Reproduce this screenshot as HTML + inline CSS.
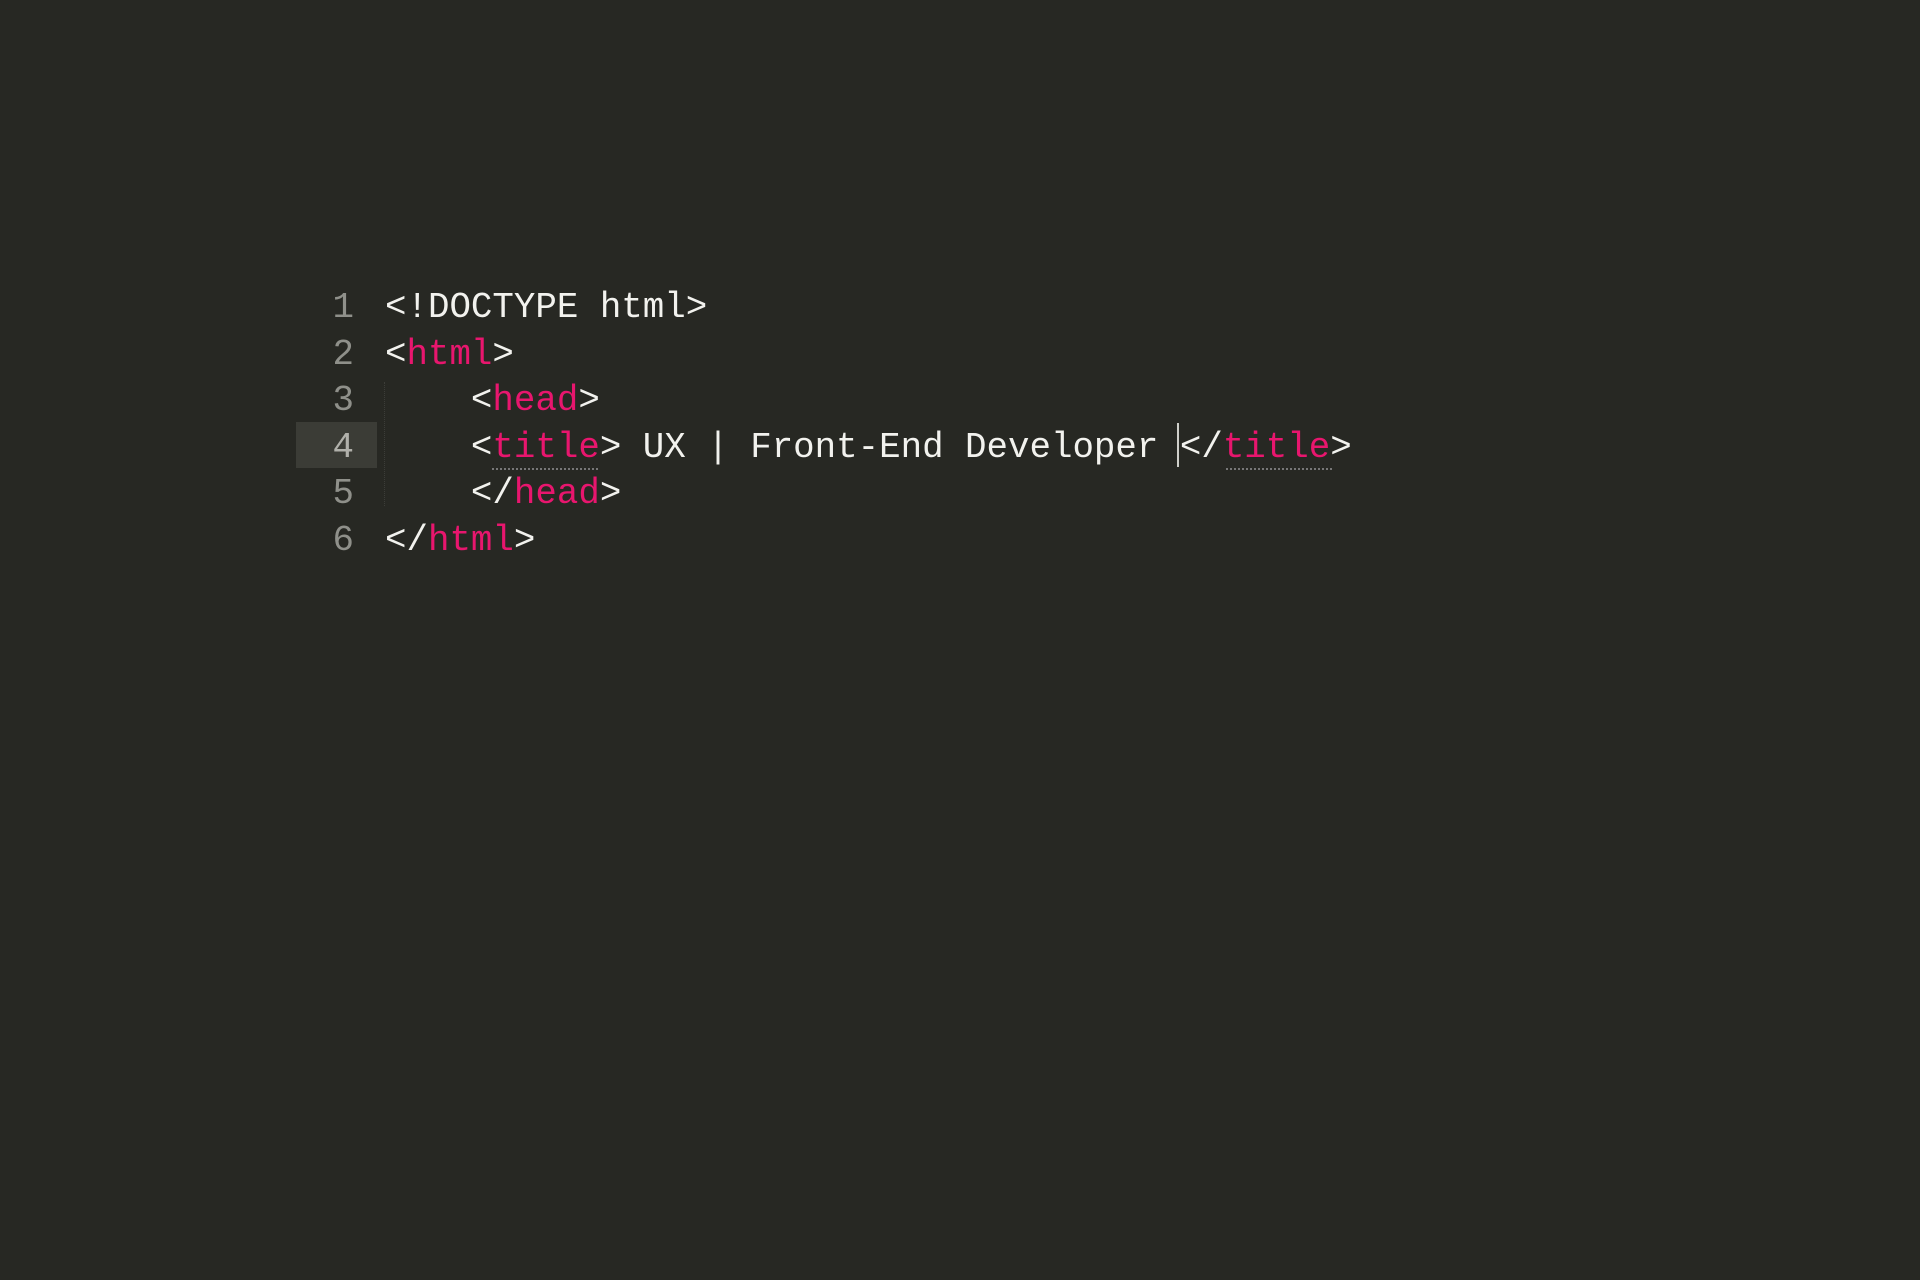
<!DOCTYPE html>
<html><head><style>
html,body{margin:0;width:1920px;height:1280px;background:#272823;overflow:hidden}
.code{position:absolute;left:0;top:285px;font-family:"Liberation Mono",monospace;font-size:35.8px;line-height:46.5px;color:#f2f2ee;white-space:pre}
.ln{position:absolute;left:296px;width:58px;text-align:right;color:#8f908a}
.tx{position:absolute;left:385px}
.p{color:#e8166e}
.hl{position:absolute;left:296px;top:422px;width:81px;height:46px;background:#3b3c36}
.guide{position:absolute;left:384px;top:382px;height:124px;border-left:1px dotted #3c3d38}
.cur{position:absolute;left:1177px;top:423px;width:2px;height:44px;background:#cfcfca}
.ul{position:absolute;height:1px;border-top:2px dotted #777}
</style></head><body>
<div class="hl"></div>
<div class="guide"></div>
<div class="code">
<div class="ln" style="top:0">1</div><div class="tx" style="top:0">&lt;!DOCTYPE html&gt;</div>
<div class="ln" style="top:46.5px">2</div><div class="tx" style="top:46.5px">&lt;<span class="p">html</span>&gt;</div>
<div class="ln" style="top:93px">3</div><div class="tx" style="top:93px">    &lt;<span class="p">head</span>&gt;</div>
<div class="ln" style="top:139.5px;color:#b0b0aa">4</div><div class="tx" style="top:139.5px">    &lt;<span class="p">title</span>&gt; UX | Front-End Developer &lt;/<span class="p">title</span>&gt;</div>
<div class="ln" style="top:186px">5</div><div class="tx" style="top:186px">    &lt;/<span class="p">head</span>&gt;</div>
<div class="ln" style="top:232.5px">6</div><div class="tx" style="top:232.5px">&lt;/<span class="p">html</span>&gt;</div>
</div>
<div class="cur"></div>
<div class="ul" style="left:492px;top:468px;width:106px"></div>
<div class="ul" style="left:1226px;top:468px;width:106px"></div>
</body></html>
